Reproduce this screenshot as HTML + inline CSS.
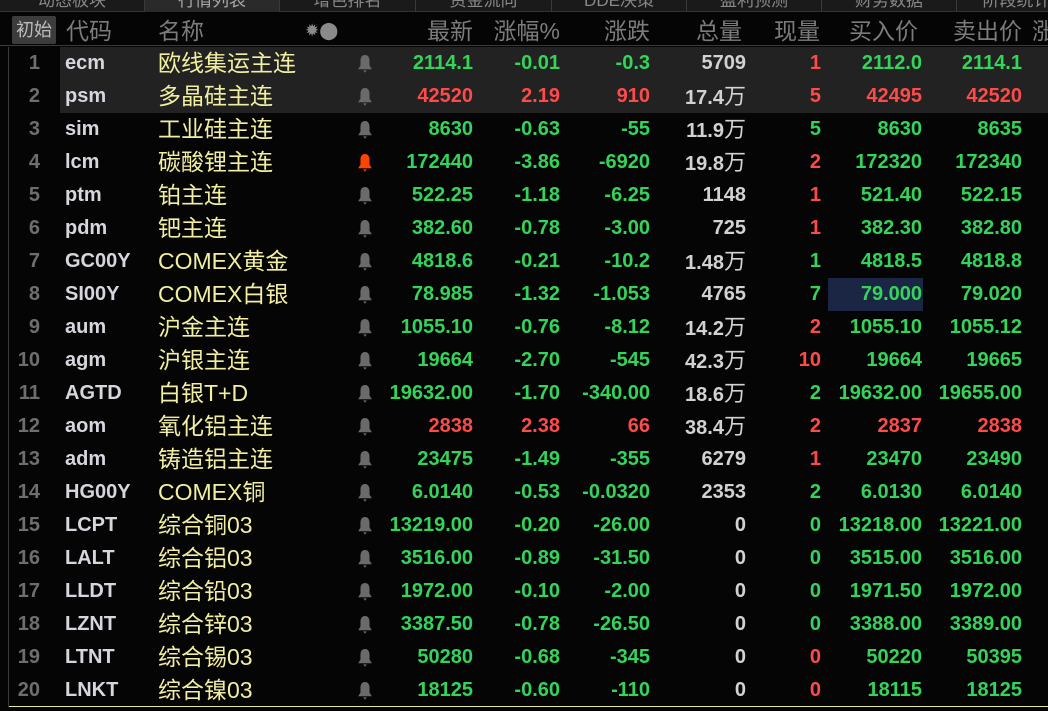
<!DOCTYPE html>
<html><head><meta charset="utf-8"><style>
*{margin:0;padding:0;box-sizing:border-box}
body{width:1048px;height:711px;background:#050505;overflow:hidden;position:relative;font-family:"Liberation Sans","Noto Sans CJK SC",sans-serif}
.tabs{position:absolute;left:0;top:0;width:1048px;height:12px;background:#1a1a1a;border-bottom:1px solid #333}
.tab{position:absolute;top:-9px;height:21px;color:#888;font-size:17px;text-align:center;border-right:1px solid #3a3a3a;line-height:20px}
.tab.sel{background:#2a2a2a;color:#aaa}
.hdr{position:absolute;top:12px;left:0;width:1048px;height:34px;border-bottom:1px solid #3a3a3a;background:#050505}
.h{position:absolute;top:4px;color:#7c7c7c;font-size:23px;line-height:30px;white-space:nowrap}
.btn{position:absolute;left:12px;top:16px;width:44px;height:28px;background:#3c3c3c;color:#bdbdbd;font-size:18px;line-height:28px;text-align:center;border-radius:2px}
.lv{position:absolute;left:8px;top:47px;width:1px;height:660px;background:#3a3a3a}
.bot{position:absolute;left:9px;top:706px;width:1039px;height:1px;background:#e8e6a0}
.row{position:absolute;left:0;width:1048px;height:33px}
.row.hl::before{content:"";position:absolute;left:60px;top:0;width:988px;height:33px;background:#222}
.c{position:absolute;top:0;line-height:33px;font-size:20px;font-weight:bold;white-space:nowrap}
.n{right:1008px;color:#6e6e6e;font-weight:bold}
.code{left:65px;color:#d6d6de}
.name{left:158px;color:#f2efa0;font-weight:normal;font-size:23px}
.r{text-align:right}
.g{color:#33d45a}.rd{color:#ff4a4a}.w{color:#d2d2d2}
.bell{position:absolute;left:357px;top:7px;width:16px;height:19px}
.sel2{position:absolute;left:828px;top:0;width:95px;height:33px;background:#1b2544}
</style></head><body>
<div class="tabs">
<div class="tab" style="left:0;width:145px">动态板块</div>
<div class="tab sel" style="left:145px;width:135px">行情列表</div>
<div class="tab" style="left:280px;width:136px">增色排名</div>
<div class="tab" style="left:416px;width:136px">资金流向</div>
<div class="tab" style="left:552px;width:135px">DDE决策</div>
<div class="tab" style="left:687px;width:135px">盈利预测</div>
<div class="tab" style="left:822px;width:135px">财务数据</div>
<div class="tab" style="left:957px;width:120px">阶段统计</div>
</div>
<div class="hdr">
<span class="h" style="left:66px">代码</span>
<span class="h" style="left:158px">名称</span>
<span class="h" style="left:305px;font-size:17px;color:#8a8a8a">✹⬤</span>
<span class="h" style="right:575px">最新</span>
<span class="h" style="right:488px">涨幅%</span>
<span class="h" style="right:398px">涨跌</span>
<span class="h" style="right:306px">总量</span>
<span class="h" style="right:228px">现量</span>
<span class="h" style="right:130px">买入价</span>
<span class="h" style="right:26px">卖出价</span>
<span class="h" style="left:1032px">涨</span>
</div>
<div class="btn">初始</div>
<div class="lv"></div>
<div id="rows"></div>
<div class="bot"></div>
<script>
var D=[
[1,"ecm","欧线集运主连",0,"2114.1","-0.01","-0.3","5709","1","2112.0","2114.1","g","rd"],
[2,"psm","多晶硅主连",0,"42520","2.19","910","17.4万","5","42495","42520","rd","rd"],
[3,"sim","工业硅主连",0,"8630","-0.63","-55","11.9万","5","8630","8635","g","g"],
[4,"lcm","碳酸锂主连",1,"172440","-3.86","-6920","19.8万","2","172320","172340","g","rd"],
[5,"ptm","铂主连",0,"522.25","-1.18","-6.25","1148","1","521.40","522.15","g","rd"],
[6,"pdm","钯主连",0,"382.60","-0.78","-3.00","725","1","382.30","382.80","g","rd"],
[7,"GC00Y","COMEX黄金",0,"4818.6","-0.21","-10.2","1.48万","1","4818.5","4818.8","g","g"],
[8,"SI00Y","COMEX白银",0,"78.985","-1.32","-1.053","4765","7","79.000","79.020","g","g"],
[9,"aum","沪金主连",0,"1055.10","-0.76","-8.12","14.2万","2","1055.10","1055.12","g","rd"],
[10,"agm","沪银主连",0,"19664","-2.70","-545","42.3万","10","19664","19665","g","rd"],
[11,"AGTD","白银T+D",0,"19632.00","-1.70","-340.00","18.6万","2","19632.00","19655.00","g","g"],
[12,"aom","氧化铝主连",0,"2838","2.38","66","38.4万","2","2837","2838","rd","rd"],
[13,"adm","铸造铝主连",0,"23475","-1.49","-355","6279","1","23470","23490","g","rd"],
[14,"HG00Y","COMEX铜",0,"6.0140","-0.53","-0.0320","2353","2","6.0130","6.0140","g","g"],
[15,"LCPT","综合铜03",0,"13219.00","-0.20","-26.00","0","0","13218.00","13221.00","g","g"],
[16,"LALT","综合铝03",0,"3516.00","-0.89","-31.50","0","0","3515.00","3516.00","g","g"],
[17,"LLDT","综合铅03",0,"1972.00","-0.10","-2.00","0","0","1971.50","1972.00","g","g"],
[18,"LZNT","综合锌03",0,"3387.50","-0.78","-26.50","0","0","3388.00","3389.00","g","g"],
[19,"LTNT","综合锡03",0,"50280","-0.68","-345","0","0","50220","50395","g","rd"],
[20,"LNKT","综合镍03",0,"18125","-0.60","-110","0","0","18115","18125","g","rd"]];
var h="";
D.forEach(function(d,i){
 var top=47+33*i, p=d[11];
 var bell='<svg class="bell" viewBox="0 0 15 18"><path d="M7.5 1 C4.2 1 3.2 3.8 3.2 6.5 L3.2 11 L1 14.5 L14 14.5 L11.8 11 L11.8 6.5 C11.8 3.8 10.8 1 7.5 1Z M5.8 15.5 L9.2 15.5 L7.5 17.8Z" fill="'+(d[3]?'#ff4400':'#6a6a6a')+'"/></svg>';
 var vol=d[7].replace('万','<span style="font-weight:normal;font-size:22px">万</span>');
 h+='<div class="row'+(i<2?' hl':'')+'" style="top:'+top+'px">'+(i==7?'<div class="sel2"></div>':'')+
 '<span class="c n">'+d[0]+'</span><span class="c code">'+d[1]+'</span><span class="c name">'+d[2]+'</span>'+bell+
 '<span class="c r '+p+'" style="right:575px">'+d[4]+'</span>'+
 '<span class="c r '+p+'" style="right:488px">'+d[5]+'</span>'+
 '<span class="c r '+p+'" style="right:398px">'+d[6]+'</span>'+
 '<span class="c r w" style="right:302px">'+vol+'</span>'+
 '<span class="c r '+d[12]+'" style="right:227px">'+d[8]+'</span>'+
 '<span class="c r '+p+'" style="right:126px">'+d[9]+'</span>'+
 '<span class="c r '+p+'" style="right:26px">'+d[10]+'</span></div>';
});
document.getElementById("rows").innerHTML=h;
</script>
</body></html>
